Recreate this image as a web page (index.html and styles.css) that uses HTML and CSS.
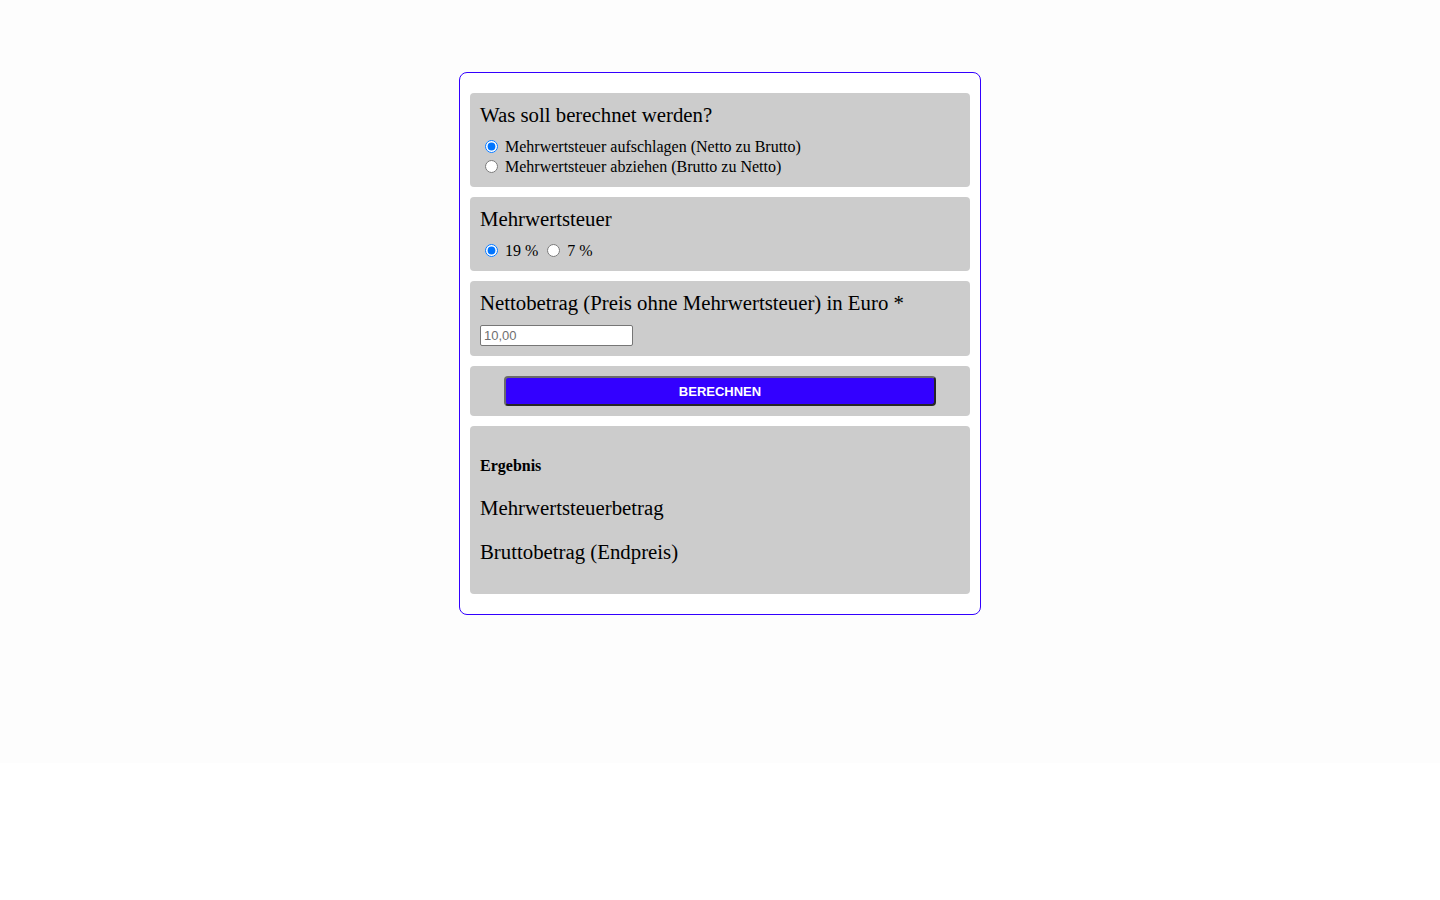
FILE: index.html
```html
<!DOCTYPE html>
<html lang="de">
<head>
<meta charset="utf-8">
<title>Mehrwertsteuer-Rechner</title>
<link rel="stylesheet" href="styles.css">
</head>
<body>
<div class="page">
  <form class="calc">
    <div class="box">
      <div class="title">Was soll berechnet werden?</div>
      <div class="row"><input type="radio" name="mode" checked> Mehrwertsteuer aufschlagen (Netto zu Brutto)</div>
      <div class="row"><input type="radio" name="mode"> Mehrwertsteuer abziehen (Brutto zu Netto)</div>
    </div>
    <div class="box">
      <div class="title">Mehrwertsteuer</div>
      <div class="row"><input type="radio" name="rate" checked> 19 % <input type="radio" name="rate"> 7 %</div>
    </div>
    <div class="box">
      <div class="title">Nettobetrag (Preis ohne Mehrwertsteuer) in Euro *</div>
      <input class="amount" type="text" placeholder="10,00">
    </div>
    <div class="box box-center">
      <button type="button" class="btn">BERECHNEN</button>
    </div>
    <div class="box">
      <h4 class="res-title">Ergebnis</h4>
      <p class="res-line">Mehrwertsteuerbetrag</p>
      <p class="res-line">Bruttobetrag (Endpreis)</p>
    </div>
  </form>
</div>
</body>
</html>
```
FILE: styles.css
```css
html, body {
  margin: 0;
  background: #ffffff;
}
body {
  font-family: "Liberation Serif", "Times New Roman", serif;
  font-size: 16px;
  color: #000;
}
.page {
  background: #fdfdfd;
  min-height: 763px;
  box-sizing: border-box;
  padding-top: 72px;
}
.calc {
  width: 500px;
  margin: 0 auto;
  border: 1px solid #3300ff;
  border-radius: 8px;
  padding: 20px 10px 10px;
  background: #ffffff;
}
.box {
  background: #cccccc;
  border-radius: 4px;
  padding: 10px;
  margin-bottom: 10px;
}
.box-center {
  text-align: center;
}
.title {
  font-size: 20.8px;
  line-height: 24px;
  margin-bottom: 10px;
}
.row {
  line-height: 20px;
  height: 20px;
}
.row input[type="radio"] {
  margin: 0 3px 0 5px;
  vertical-align: -1px;
}
.amount {
  display: block;
  width: 153px;
  height: 21px;
  box-sizing: border-box;
  font-family: "Liberation Sans", Arial, sans-serif;
  font-size: 13px;
  padding: 1px 3px;
  border: 1px solid #767676;
  border-radius: 2px;
  background: #fff;
  margin-top: 10px;
}
.amount::placeholder {
  color: #6f6f6f;
}
.btn {
  display: block;
  margin: 0 auto;
  width: 90%;
  height: 30px;
  background: #3300ff;
  color: #ffffff;
  font-family: "Liberation Sans", Arial, sans-serif;
  font-size: 13px;
  font-weight: bold;
  border: 2px solid;
  border-color: #6b6b6b #262626 #262626 #6b6b6b;
  border-radius: 4px;
  cursor: pointer;
}
.res-title {
  font-size: 16px;
  line-height: 18px;
  font-weight: bold;
  margin: 21px 0 21px;
}
.res-line {
  font-size: 20.8px;
  line-height: 24px;
  margin: 20px 0;
}
```
